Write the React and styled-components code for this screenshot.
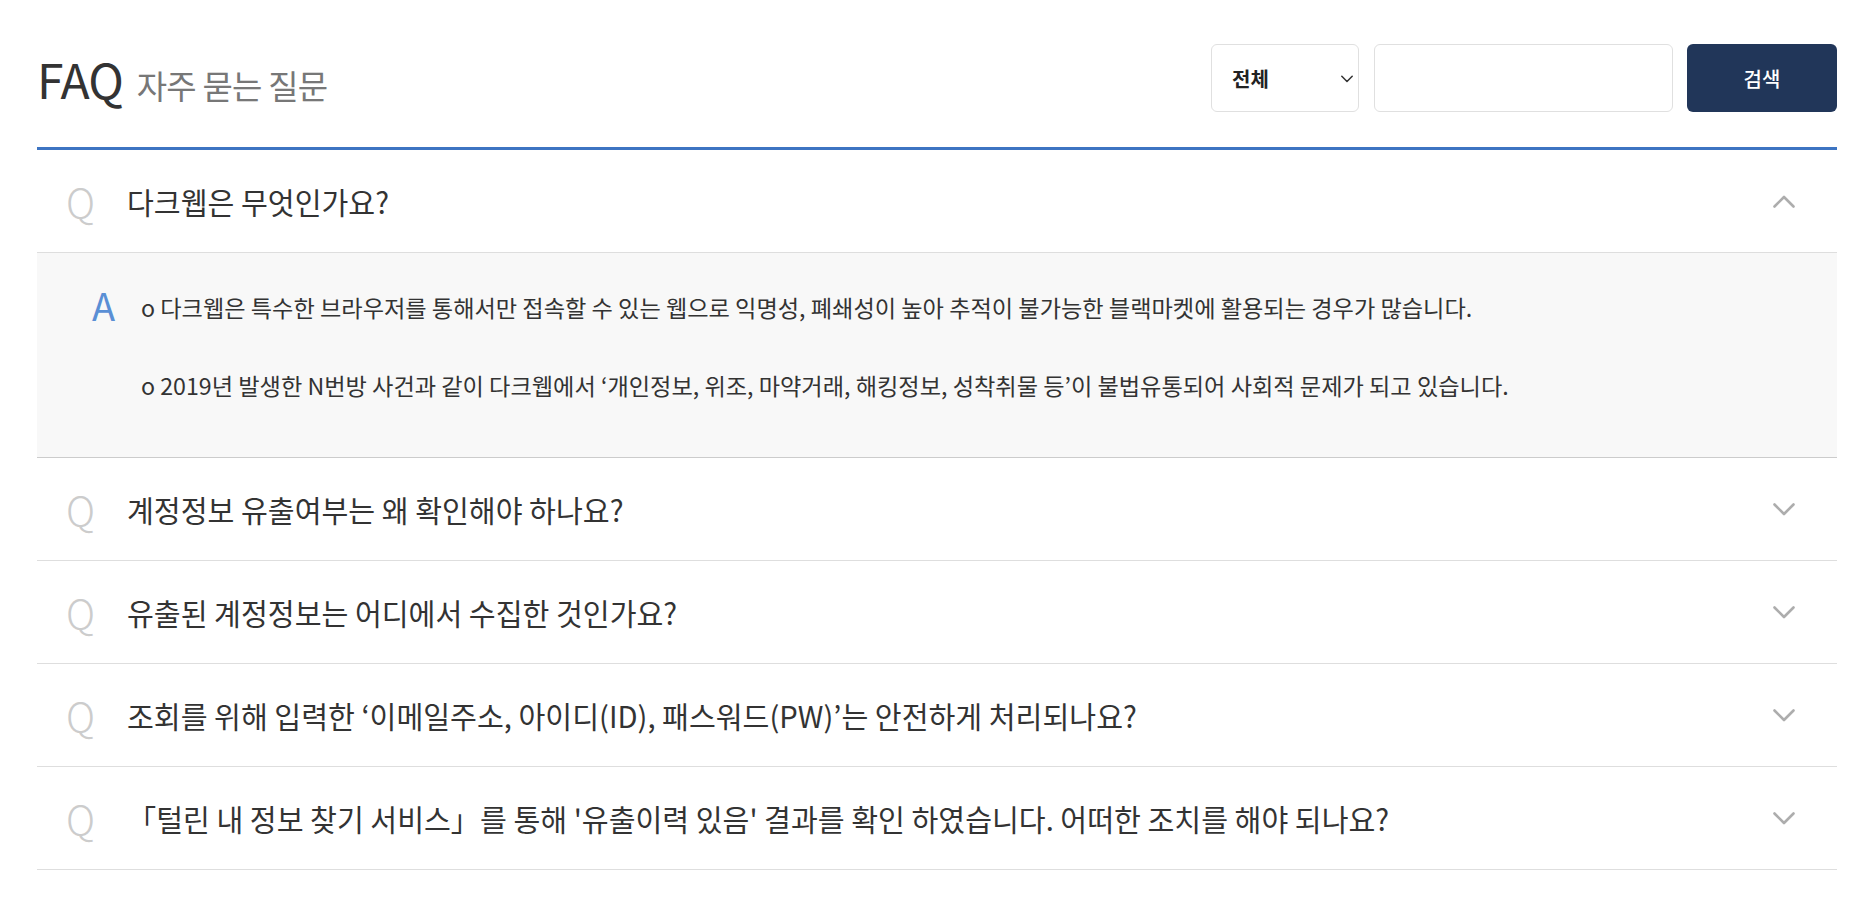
import React from "react";
import styled, { createGlobalStyle } from "styled-components";

const GlobalStyle = createGlobalStyle`
	body {
		margin: 0;
		background: #fff;
		font-family: "Noto Sans CJK KR", "Noto Sans", sans-serif;
		color: #333;
	}
`;

const faqs = [
	{
		q: "다크웹은 무엇인가요?",
		open: true,
		a: [
			"o 다크웹은 특수한 브라우저를 통해서만 접속할 수 있는 웹으로 익명성, 폐쇄성이 높아 추적이 불가능한 블랙마켓에 활용되는 경우가 많습니다.",
			"o 2019년 발생한 N번방 사건과 같이 다크웹에서 ‘개인정보, 위조, 마약거래, 해킹정보, 성착취물 등’이 불법유통되어 사회적 문제가 되고 있습니다.",
		],
	},
	{ q: "계정정보 유출여부는 왜 확인해야 하나요?" },
	{ q: "유출된 계정정보는 어디에서 수집한 것인가요?" },
	{ q: "조회를 위해 입력한 ‘이메일주소, 아이디(ID), 패스워드(PW)’는 안전하게 처리되나요?" },
	{ q: "「털린 내 정보 찾기 서비스」를 통해 '유출이력 있음' 결과를 확인 하였습니다. 어떠한 조치를 해야 되나요?" },
];

const Chevron = ({ up, size = 22, color = "#adadad", stroke = 2.6 }) => (
	<svg width={size} height={size / 2 + 2} viewBox="0 0 22 13" fill="none">
		<polyline
			points={up ? "1.5,11.5 11,2 20.5,11.5" : "1.5,1.5 11,11 20.5,1.5"}
			stroke={color}
			strokeWidth={stroke}
			strokeLinecap="round"
			strokeLinejoin="round"
		/>
	</svg>
);

const App = () => {
	return (
		<>
			<GlobalStyle />
			<Page>
				<Header>
					<Title>
						FAQ<Sub>자주 묻는 질문</Sub>
					</Title>
					<Search>
						<SelectWrap>
							<Select defaultValue='all'>
								<option value='all'>전체</option>
							</Select>
							<SelectArrow>
								<Chevron size={12} color='#333' stroke={2.8} />
							</SelectArrow>
						</SelectWrap>
						<Input type='text' />
						<Button>검색</Button>
					</Search>
				</Header>

				<List>
					{faqs.map((item, i) => (
						<Item key={i}>
							<Question>
								<QMark>Q</QMark>
								<QText>{item.q}</QText>
								<Toggle>
									<Chevron up={item.open} />
								</Toggle>
							</Question>
							{item.open && (
								<Answer>
									<AMark>A</AMark>
									<AText>
										{item.a.map((line, j) => (
											<p key={j}>{line}</p>
										))}
									</AText>
								</Answer>
							)}
						</Item>
					))}
				</List>
			</Page>
		</>
	);
};

const Page = styled.div`
	padding: 0 31px 0 37px;
`;

const Header = styled.div`
	display: flex;
	align-items: center;
	justify-content: space-between;
	padding: 44px 0 35px;
`;

const Title = styled.h1`
	margin: 0;
	font-size: 48px;
	font-weight: 400;
	line-height: 1;
	color: #333;
	letter-spacing: -1px;
`;

const Sub = styled.span`
	margin-left: 14px;
	font-size: 33px;
	color: #777;
	letter-spacing: -0.8px;
`;

const Search = styled.div`
	display: flex;
	align-items: center;
`;

const SelectWrap = styled.div`
	position: relative;
	width: 148px;
	height: 68px;
	margin-right: 15px;
`;

const Select = styled.select`
	appearance: none;
	width: 100%;
	height: 100%;
	box-sizing: border-box;
	border: 1px solid #e0e0e0;
	border-radius: 6px;
	background: #fff;
	padding: 0 0 0 20px;
	font-family: inherit;
	font-size: 20px;
	font-weight: 700;
	color: #222;
	outline: none;
`;

const SelectArrow = styled.span`
	position: absolute;
	right: 6px;
	top: 31px;
	display: flex;
	pointer-events: none;
`;

const Input = styled.input`
	width: 299px;
	height: 68px;
	box-sizing: border-box;
	border: 1px solid #e0e0e0;
	border-radius: 6px;
	margin-right: 14px;
	outline: none;
`;

const Button = styled.button`
	width: 150px;
	height: 68px;
	border: 0;
	border-radius: 6px;
	background: #213659;
	color: #fff;
	font-family: inherit;
	font-size: 20px;
	font-weight: 500;
`;

const List = styled.div`
	border-top: 3px solid #3d74c2;
`;

const Item = styled.div``;

const Question = styled.div`
	display: flex;
	align-items: center;
	height: 102px;
	padding: 0 42px 0 29px;
	border-bottom: 1px solid #dedede;
`;

const QMark = styled.span`
	width: 61px;
	flex: none;
	font-size: 40px;
	font-weight: 300;
	color: #cccccc;
	line-height: 1;
`;

const QText = styled.span`
	flex: 1;
	font-size: 29.2px;
	color: #333;
`;

const Toggle = styled.span`
	display: flex;
	flex: none;
`;

const Answer = styled.div`
	display: flex;
	align-items: flex-start;
	background: #f8f8f8;
	padding: 38px 0 56px 55px;
	border-bottom: 1px solid #cccccc;
`;

const AMark = styled.span`
	width: 49px;
	flex: none;
	margin-top: -5px;
	font-size: 38px;
	color: #5a8fd5;
	line-height: 1;
`;

const AText = styled.div`
	display: flex;
	flex-direction: column;
	gap: 46px;

	p {
		margin: 0;
		font-size: 23.2px;
		line-height: 32px;
		color: #333;
	}
`;

export default App;
